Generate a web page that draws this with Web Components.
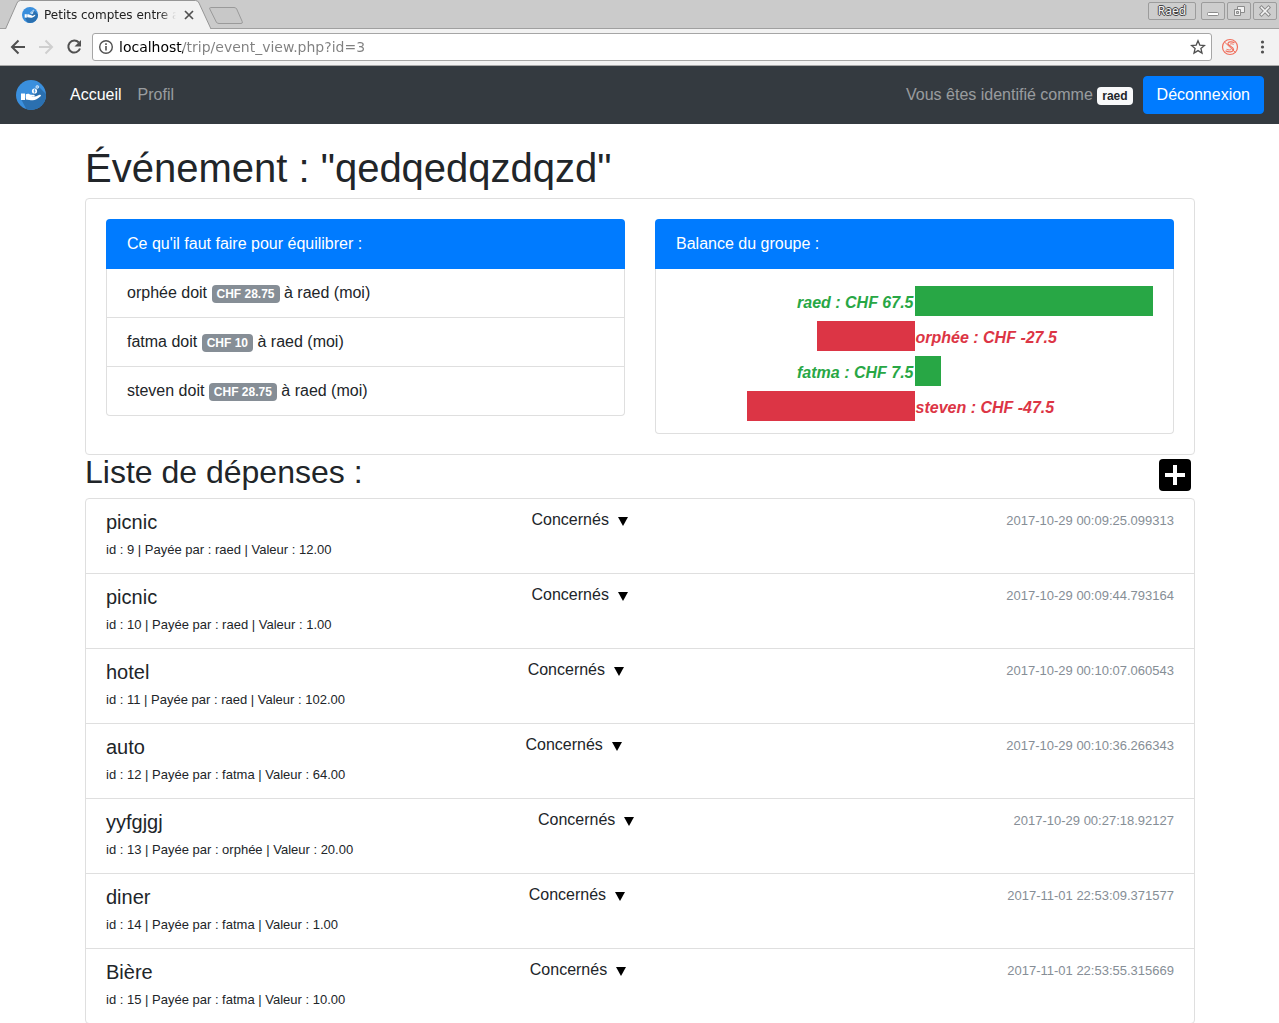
<!DOCTYPE html>
<html lang="fr">
<head>
<meta charset="utf-8">
<meta name="viewport" content="width=device-width, initial-scale=1">
<title>Petits comptes entre amis</title>
<style>
  html, body { height: 100%; margin: 0; }
  body {
    display: flex; flex-direction: column; overflow: hidden;
    font: 16px/24px "Liberation Sans", Arial, sans-serif;
    color: #212529; background: #fff;
  }
  main { flex: 1; min-height: 0; overflow: hidden; }
</style>
</head>
<body>
<browser-bar url="localhost/trip/event_view.php?id=3" user="Raed">Petits comptes entre amis</browser-bar>
<main>
  <site-nav user="raed"></site-nav>
  <event-page>
    <span slot="title">Événement : "qedqedqzdqzd"</span>
    <group-panel slot="summary" heading="Ce qu'il faut faire pour équilibrer :">
      <debt-line from="orphée" amount="CHF 28.75" to="raed (moi)"></debt-line>
      <debt-line from="fatma" amount="CHF 10" to="raed (moi)"></debt-line>
      <debt-line from="steven" amount="CHF 28.75" to="raed (moi)"></debt-line>
    </group-panel>
    <group-panel slot="summary" heading="Balance du groupe :">
      <balance-chart>
        <balance-bar name="raed" value="67.5" max="67.5"></balance-bar>
        <balance-bar name="orphée" value="-27.5" max="67.5"></balance-bar>
        <balance-bar name="fatma" value="7.5" max="67.5"></balance-bar>
        <balance-bar name="steven" value="-47.5" max="67.5"></balance-bar>
      </balance-chart>
    </group-panel>
    <expense-row number="9" payer="raed" value="12.00" date="2017-10-29 00:09:25.099313">picnic</expense-row>
    <expense-row number="10" payer="raed" value="1.00" date="2017-10-29 00:09:44.793164">picnic</expense-row>
    <expense-row number="11" payer="raed" value="102.00" date="2017-10-29 00:10:07.060543">hotel</expense-row>
    <expense-row number="12" payer="fatma" value="64.00" date="2017-10-29 00:10:36.266343">auto</expense-row>
    <expense-row number="13" payer="orphée" value="20.00" date="2017-10-29 00:27:18.92127">yyfgjgj</expense-row>
    <expense-row number="14" payer="fatma" value="1.00" date="2017-11-01 22:53:09.371577">diner</expense-row>
    <expense-row number="15" payer="fatma" value="10.00" date="2017-11-01 22:53:55.315669">Bière</expense-row>
  </event-page>
</main>

<script>
class BaseElement extends HTMLElement {
  connectedCallback() {
    if (this.shadowRoot) return;
    this.attachShadow({ mode: 'open' }).innerHTML = this.render();
  }
  attr(name) { return this.getAttribute(name) || ''; }
}

class AppLogo extends BaseElement {
  render() {
    return `<style>:host{display:block;width:30px;height:30px;flex:none}svg{display:block;width:100%;height:100%}</style>
    <svg viewBox="0 0 30 30" aria-hidden="true">
      <defs><clipPath id="c"><circle cx="15" cy="15" r="15"/></clipPath></defs>
      <g clip-path="url(#c)">
        <rect width="30" height="30" fill="#3a8fdd"/>
        <path d="M22 6 L40 24 V40 H16 L5 19 L14 17 L18 12Z" fill="#2b70b0"/>
      </g>
      <path d="M5 13.5h4v6.500h-4z" fill="#fff"/>
      <path d="M9.800 14.200c2.200-1.200 3.800-.2 5 .6h3c1.300 0 1.300 1.700 0 1.700h-2.600c3 .8 5.200-.2 8.300-1.700 1.300-.5 2 .6 1.100 1.400-3 2.500-5.300 4-7.800 4-2.700 0-4.600-.8-7-.8z" fill="#fff"/>
      <circle cx="18.500" cy="11" r="2.600" fill="#fff"/>
      <path d="M19.300 10c-1.500-.7-1.900.6-.8.9 1.300.4.8 1.600-.8.900M18.500 9.300v3.400" fill="none" stroke="#3a8fdd" stroke-width=".7"/>
      <circle cx="21.300" cy="7" r="1.400" fill="#8fc0ee" stroke="#d5e8fa" stroke-width=".8"/>
    </svg>`;
  }
}

class BrowserBar extends BaseElement {
  render() {
    return `<style>
      :host{display:block;flex:none;font-family:"DejaVu Sans",sans-serif;background:#f2f2f2;border-bottom:1px solid #a9a9a9}
      button{display:flex;align-items:center;justify-content:center;margin:0;padding:0;border:0;background:none;font:inherit;color:inherit}
      svg{display:block}
      .strip{display:flex;height:28px;background:#cbcbcb;border-bottom:1px solid #a0a0a0;padding-right:2px}
      .tab{position:relative;display:flex;align-items:center;width:212px;height:29px;box-sizing:border-box;padding:1px 16px 0 22px;font-size:12px;line-height:16px;color:#222}
      .shape{position:absolute;left:0;top:0}
      .tab app-logo,.tab span,.tab button{position:relative}
      .tab app-logo{width:16px;height:16px;margin-right:6px}
      .tab span{flex:1;min-width:0;overflow:hidden;white-space:nowrap;-webkit-mask-image:linear-gradient(90deg,#000 88%,transparent);mask-image:linear-gradient(90deg,#000 88%,transparent)}
      .tab button{width:14px;height:16px;margin-left:6px}
      .new{align-self:flex-start;margin:7px 0 0 -4px}
      .wins{margin-left:auto;display:flex;gap:2px;margin-top:2px;align-self:flex-start}
      .wins button{width:24px;height:18px;border:1px solid #9c9c9c;border-radius:2px;box-sizing:border-box;background:#cdcdcd}
      .wins .user{width:48px;margin-right:3px;font:12px/16px "Noto Sans",sans-serif;color:#f4f4f4;text-shadow:1px 0 #444,-1px 0 #444,0 1px #444,0 -1px #444}
      .tools{display:flex;align-items:center;height:36px;padding:0 7px 0 8px}
      .tools button{width:20px;height:20px;margin-right:8px}
      .box{flex:1;display:flex;align-items:center;box-sizing:border-box;height:28px;border:1px solid #a6a6a6;border-radius:3px;background:#fff;padding:0 5px;min-width:0}
      .box button{margin:0;width:16px}
      input{flex:1;min-width:0;height:24px;margin:0 5px;padding:0;border:0;outline:0;font:14px/20px "DejaVu Sans",sans-serif;
        color:#808080;background:linear-gradient(90deg,#000 64px,#808080 64px);-webkit-background-clip:text;background-clip:text;-webkit-text-fill-color:transparent}
      .tools .ext{margin:0 0 0 8px}
      .tools .menu{margin:0 0 0 12px}
    </style>
    <div class="strip">
      <div class="tab">
        <svg class="shape" width="212" height="29" aria-hidden="true"><path d="M5.500 29 L17 3 Q18 .5 20.500 .5 H195.500 Q198 .5 199 3 L211 29" fill="#f2f2f2" stroke="#969696"/></svg>
        <app-logo></app-logo><span><slot></slot></span>
        <button aria-label="Fermer l'onglet"><svg width="14" height="16"><path d="M3 4l8 8M11 4l-8 8" stroke="#505050" stroke-width="1.700"/></svg></button>
      </div>
      <button class="new" aria-label="Nouvel onglet"><svg width="36" height="18"><path d="M2.500 .5H26q2 0 2.700 1.500l5.500 12.500q.8 2-1.200 2H11q-2 0-2.700-1.500L1.800 2q-.5-1.500.7-1.500z" fill="#c8c8c8" stroke="#9a9a9a"/></svg></button>
      <div class="wins">
        <button class="user">${this.attr('user')}</button>
        <button aria-label="Réduire"><svg width="14" height="14"><rect x="1.500" y="8.500" width="11" height="3" rx="1" fill="#fff" stroke="#8b8b8b"/></svg></button>
        <button aria-label="Restaurer"><svg width="14" height="14" fill="#f0f0f0" stroke="#8b8b8b"><path d="M5.500 2.500h7v6h-7z"/><path d="M2.500 5.500h6v6h-6z"/><path d="M4.500 7.500h2v2h-2z" fill="#cdcdcd"/></svg></button>
        <button aria-label="Fermer"><svg width="14" height="14" stroke-linecap="square"><path d="M3.500 3.500l7 7M10.500 3.500l-7 7" stroke="#8b8b8b" stroke-width="3.600"/><path d="M3.500 3.500l7 7M10.500 3.500l-7 7" stroke="#f4f4f4" stroke-width="1.600"/></svg></button>
      </div>
    </div>
    <div class="tools">
      <button aria-label="Retour"><svg width="20" height="20" fill="none" stroke="#505050" stroke-width="2"><path d="M17 10H4M10.500 3.500L4 10l6.500 6.500"/></svg></button>
      <button aria-label="Suivant"><svg width="20" height="20" fill="none" stroke="#cfcfcf" stroke-width="2"><path d="M3 10h13M9.500 3.500L16 10l-6.500 6.500"/></svg></button>
      <button aria-label="Actualiser"><svg width="20" height="20"><path d="M14.800 5.500A6 6 0 1 0 16 11.500" fill="none" stroke="#505050" stroke-width="2"/><path d="M17 3v6.500h-6.500z" fill="#505050"/></svg></button>
      <div class="box">
        <button aria-label="Informations"><svg width="16" height="16"><circle cx="8" cy="8" r="6.300" fill="none" stroke="#505050" stroke-width="1.400"/><path d="M8 7v4.500M8 4.300v1.600" stroke="#505050" stroke-width="1.600"/></svg></button>
        <input type="text" aria-label="Adresse" spellcheck="false" value="${this.attr('url')}">
        <button aria-label="Favori"><svg width="16" height="16"><path d="M8 1.800l1.800 4.300 4.700.4-3.600 3 1.100 4.600L8 11.600l-4 2.500 1.100-4.600-3.600-3 4.700-.4z" fill="none" stroke="#505050" stroke-width="1.300"/></svg></button>
      </div>
      <button class="ext" aria-label="Extension"><svg width="20" height="20" fill="none" stroke="#f0705e"><circle cx="10" cy="10" r="7.500" stroke-width="1.200"/><path d="M14.500 6c-2.500-2-7-1.200-6.500 1 .5 2 5.700 3 5.500 5.500-.3 2.800-5 3-8 1.200" stroke-width="1.300"/><path d="M4.500 5l11 10.500M13.500 7.500c-1.500-1-3-.8-3.500-.2M6.500 12.300c2 .9 4 .8 4.700-.1" stroke-width="1"/></svg></button>
      <button class="menu" aria-label="Menu"><svg width="20" height="20" fill="#505050"><circle cx="10.500" cy="5" r="1.600"/><circle cx="10.500" cy="10" r="1.600"/><circle cx="10.500" cy="15" r="1.600"/></svg></button>
    </div>`;
  }
}

class SiteNav extends BaseElement {
  render() {
    return `<style>
      :host{display:block;background:#343a40}
      nav{display:flex;align-items:center;padding:10px 15px 10px 16px;color:rgba(255,255,255,.5)}
      a{color:inherit;text-decoration:none}
      .brand{margin-right:16px}
      .link{padding:0 8px}
      .link.active{color:#fff}
      .who{margin-left:auto;margin-right:10px}
      .badge{display:inline-block;padding:3px 5px;font-size:12px;font-weight:700;line-height:12px;border-radius:4px;background:#f8f9fa;color:#212529}
      button{margin:0;padding:6px 13px;font:inherit;color:#fff;background:#007bff;border:1px solid #007bff;border-radius:4px}
    </style>
    <nav>
      <a class="brand" href="#" aria-label="Petits comptes entre amis"><app-logo></app-logo></a>
      <a class="link active" href="#">Accueil</a>
      <a class="link" href="#">Profil</a>
      <span class="who">Vous êtes identifié comme <span class="badge">${this.attr('user')}</span></span>
      <button type="button">Déconnexion</button>
    </nav>`;
  }
}

class EventPage extends BaseElement {
  render() {
    return `<style>
      :host{display:block;max-width:1110px;margin:0 auto;padding:22px 15px 0 16px}
      h1,h2{margin:0 0 8px;font-weight:400}
      h1{font-size:40px;line-height:44px}
      h2{font-size:32px;line-height:35px}
      .card{display:grid;grid-template-columns:1fr 1fr;gap:30px;align-items:start;padding:20px;border:1px solid #dfdfdf;border-radius:4px}
      .head{display:flex;justify-content:space-between;padding-right:4px}
      button{width:32px;height:32px;margin:4px 0 0;padding:0;border:0;border-radius:4px;background:#000}
      svg{display:block}
      .list{border:1px solid #dfdfdf;border-radius:4px}
    </style>
    <h1><slot name="title"></slot></h1>
    <section class="card"><slot name="summary"></slot></section>
    <div class="head"><h2>Liste de dépenses :</h2>
      <button type="button" aria-label="Ajouter une dépense"><svg width="32" height="32"><path d="M16 6v20M6 16h20" stroke="#fff" stroke-width="4"/></svg></button>
    </div>
    <section class="list" role="list"><slot></slot></section>`;
  }
}

class GroupPanel extends BaseElement {
  render() {
    return `<style>
      :host{display:block;min-width:0}
      header{padding:13px 21px;color:#fff;background:#007bff;border-radius:4px 4px 0 0}
      div{border:1px solid #dfdfdf;border-top:0;border-radius:0 0 4px 4px}
    </style>
    <header>${this.attr('heading')}</header><div><slot></slot></div>`;
  }
}

class DebtLine extends BaseElement {
  render() {
    return `<style>
      :host{display:block;padding:12px 20px;border-top:1px solid #dfdfdf}
      :host(:first-child){border-top:0}
      .badge{display:inline-block;padding:3px 5px;font-size:12px;font-weight:700;line-height:12px;border-radius:4px;background:#868e96;color:#fff}
    </style>${this.attr('from')} doit <span class="badge">${this.attr('amount')}</span> à ${this.attr('to')}`;
  }
}

class BalanceChart extends BaseElement {
  render() {
    return `<style>:host{display:flex;flex-direction:column;gap:5px;padding:17px 20px 12px}</style><slot></slot>`;
  }
}

class BalanceBar extends BaseElement {
  render() {
    const value = Number(this.attr('value'));
    const share = Math.abs(value) / Number(this.attr('max')) * 100;
    const label = `<b>${this.attr('name')} : CHF ${this.attr('value')}</b>`;
    const bar = `<i style="width:${share}%"></i>`;
    return `<style>
      :host{display:grid;grid-template-columns:1fr 1fr;height:30px;color:${value < 0 ? '#dc3545' : '#28a745'}}
      div{display:flex;align-items:stretch}
      .debit{justify-content:flex-end}
      b{font-style:italic;padding:5px 1px 0;line-height:24px;white-space:nowrap}
      i{background:currentColor}
    </style>
    <div class="debit">${value < 0 ? bar : label}</div><div>${value < 0 ? label : bar}</div>`;
  }
}

class ExpenseRow extends BaseElement {
  connectedCallback() { this.setAttribute('role', 'listitem'); super.connectedCallback(); }
  render() {
    return `<style>
      :host{display:block;padding:12px 20px;border-top:1px solid #dfdfdf}
      :host(:nth-of-type(1)){border-top:0}
      .top{display:flex;justify-content:space-between;align-items:flex-start}
      h3{margin:0 0 4px;font-size:20px;font-weight:400;line-height:22px}
      details{line-height:18px}
      summary{display:flex;align-items:center;gap:9px;padding-right:4px;list-style:none;cursor:pointer}
      summary::-webkit-details-marker{display:none}
      svg{display:block;margin-top:2px}
      time{font-size:13px;line-height:19px;color:#868e96}
      p{margin:0;height:24px}
      small{font-size:13px;line-height:18px}
    </style>
    <div class="top">
      <h3><slot></slot></h3>
      <details><summary>Concernés<svg width="10" height="9" aria-hidden="true"><path d="M0 0h10L5 9z"/></svg></summary></details>
      <time>${this.attr('date')}</time>
    </div>
    <p><small>id : ${this.attr('number')} | Payée par : ${this.attr('payer')} | Valeur : ${this.attr('value')}</small></p>`;
  }
}

customElements.define('app-logo', AppLogo);
customElements.define('browser-bar', BrowserBar);
customElements.define('site-nav', SiteNav);
customElements.define('event-page', EventPage);
customElements.define('group-panel', GroupPanel);
customElements.define('debt-line', DebtLine);
customElements.define('balance-chart', BalanceChart);
customElements.define('balance-bar', BalanceBar);
customElements.define('expense-row', ExpenseRow);
</script>
</body>
</html>
